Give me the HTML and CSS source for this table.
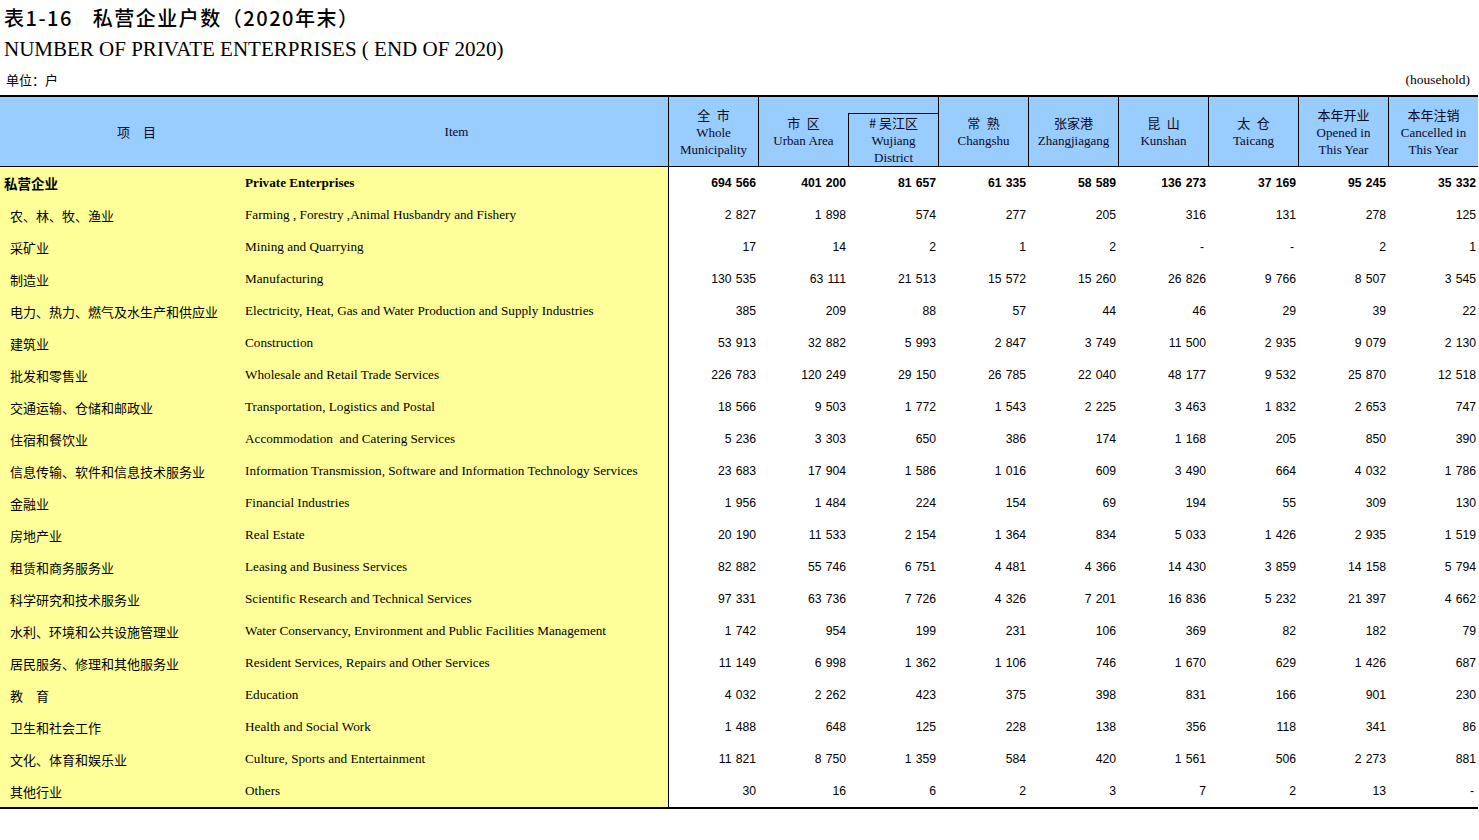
FILE: index.html
```html
<!DOCTYPE html>
<html lang="zh-CN">
<head>
<meta charset="utf-8">
<title>表1-16 私营企业户数（2020年末）</title>
<link rel="stylesheet" href="styles.css">
</head>
<body>
<div class="page">
  <h1 class="title-cn"><span class="tno">表1-16</span><span class="tname">私营企业户数（2020年末）</span></h1>
  <h2 class="title-en">NUMBER OF PRIVATE ENTERPRISES ( END OF 2020)</h2>
  <div class="unit-row"><span class="unit-cn">单位：户</span><span class="unit-en">(household)</span></div>
  <table class="data">
    <colgroup>
      <col class="c-cn"><col class="c-en">
      <col class="c-num"><col class="c-num"><col class="c-num"><col class="c-num"><col class="c-num"><col class="c-num"><col class="c-num"><col class="c-num"><col class="c-num">
    </colgroup>
    <thead>
      <tr class="hr1">
        <th rowspan="2" class="h-cn">项&emsp;目</th>
        <th rowspan="2" class="h-en">Item</th>
        <th rowspan="2" class="h-num"><span class="zh">全&ensp;市</span><br>Whole<br>Municipality</th>
        <th rowspan="2" class="h-num"><span class="zh">市&ensp;区</span><br>Urban Area</th>
        <th class="h-blank"></th>
        <th rowspan="2" class="h-num"><span class="zh">常&ensp;熟</span><br>Changshu</th>
        <th rowspan="2" class="h-num"><span class="zh">张家港</span><br>Zhangjiagang</th>
        <th rowspan="2" class="h-num"><span class="zh">昆&ensp;山</span><br>Kunshan</th>
        <th rowspan="2" class="h-num"><span class="zh">太&ensp;仓</span><br>Taicang</th>
        <th rowspan="2" class="h-num"><span class="zh">本年开业</span><br>Opened in<br>This Year</th>
        <th rowspan="2" class="h-num"><span class="zh">本年注销</span><br>Cancelled in<br>This Year</th>
      </tr>
      <tr class="hr2">
        <th class="h-sub"><span class="zh"># 吴江区</span><br>Wujiang<br>District</th>
      </tr>
    </thead>
    <tbody>
      <tr class="total"><td class="cn">私营企业</td><td class="en">Private Enterprises</td><td class="n first">694 566</td><td class="n">401 200</td><td class="n">81 657</td><td class="n">61 335</td><td class="n">58 589</td><td class="n">136 273</td><td class="n">37 169</td><td class="n">95 245</td><td class="n">35 332</td></tr>
      <tr><td class="cn">农、林、牧、渔业</td><td class="en">Farming , Forestry ,Animal Husbandry and Fishery</td><td class="n first">2 827</td><td class="n">1 898</td><td class="n">574</td><td class="n">277</td><td class="n">205</td><td class="n">316</td><td class="n">131</td><td class="n">278</td><td class="n">125</td></tr>
      <tr><td class="cn">采矿业</td><td class="en">Mining and Quarrying</td><td class="n first">17</td><td class="n">14</td><td class="n">2</td><td class="n">1</td><td class="n">2</td><td class="n dash">-</td><td class="n dash">-</td><td class="n">2</td><td class="n">1</td></tr>
      <tr><td class="cn">制造业</td><td class="en">Manufacturing</td><td class="n first">130 535</td><td class="n">63 111</td><td class="n">21 513</td><td class="n">15 572</td><td class="n">15 260</td><td class="n">26 826</td><td class="n">9 766</td><td class="n">8 507</td><td class="n">3 545</td></tr>
      <tr><td class="cn">电力、热力、燃气及水生产和供应业</td><td class="en">Electricity, Heat, Gas and Water Production and Supply Industries</td><td class="n first">385</td><td class="n">209</td><td class="n">88</td><td class="n">57</td><td class="n">44</td><td class="n">46</td><td class="n">29</td><td class="n">39</td><td class="n">22</td></tr>
      <tr><td class="cn">建筑业</td><td class="en">Construction</td><td class="n first">53 913</td><td class="n">32 882</td><td class="n">5 993</td><td class="n">2 847</td><td class="n">3 749</td><td class="n">11 500</td><td class="n">2 935</td><td class="n">9 079</td><td class="n">2 130</td></tr>
      <tr><td class="cn">批发和零售业</td><td class="en">Wholesale and Retail Trade Services</td><td class="n first">226 783</td><td class="n">120 249</td><td class="n">29 150</td><td class="n">26 785</td><td class="n">22 040</td><td class="n">48 177</td><td class="n">9 532</td><td class="n">25 870</td><td class="n">12 518</td></tr>
      <tr><td class="cn">交通运输、仓储和邮政业</td><td class="en">Transportation, Logistics and Postal</td><td class="n first">18 566</td><td class="n">9 503</td><td class="n">1 772</td><td class="n">1 543</td><td class="n">2 225</td><td class="n">3 463</td><td class="n">1 832</td><td class="n">2 653</td><td class="n">747</td></tr>
      <tr><td class="cn">住宿和餐饮业</td><td class="en">Accommodation&nbsp; and Catering Services</td><td class="n first">5 236</td><td class="n">3 303</td><td class="n">650</td><td class="n">386</td><td class="n">174</td><td class="n">1 168</td><td class="n">205</td><td class="n">850</td><td class="n">390</td></tr>
      <tr><td class="cn">信息传输、软件和信息技术服务业</td><td class="en">Information Transmission, Software and Information Technology Services</td><td class="n first">23 683</td><td class="n">17 904</td><td class="n">1 586</td><td class="n">1 016</td><td class="n">609</td><td class="n">3 490</td><td class="n">664</td><td class="n">4 032</td><td class="n">1 786</td></tr>
      <tr><td class="cn">金融业</td><td class="en">Financial Industries</td><td class="n first">1 956</td><td class="n">1 484</td><td class="n">224</td><td class="n">154</td><td class="n">69</td><td class="n">194</td><td class="n">55</td><td class="n">309</td><td class="n">130</td></tr>
      <tr><td class="cn">房地产业</td><td class="en">Real Estate</td><td class="n first">20 190</td><td class="n">11 533</td><td class="n">2 154</td><td class="n">1 364</td><td class="n">834</td><td class="n">5 033</td><td class="n">1 426</td><td class="n">2 935</td><td class="n">1 519</td></tr>
      <tr><td class="cn">租赁和商务服务业</td><td class="en">Leasing and Business Services</td><td class="n first">82 882</td><td class="n">55 746</td><td class="n">6 751</td><td class="n">4 481</td><td class="n">4 366</td><td class="n">14 430</td><td class="n">3 859</td><td class="n">14 158</td><td class="n">5 794</td></tr>
      <tr><td class="cn">科学研究和技术服务业</td><td class="en">Scientific Research and Technical Services</td><td class="n first">97 331</td><td class="n">63 736</td><td class="n">7 726</td><td class="n">4 326</td><td class="n">7 201</td><td class="n">16 836</td><td class="n">5 232</td><td class="n">21 397</td><td class="n">4 662</td></tr>
      <tr><td class="cn">水利、环境和公共设施管理业</td><td class="en">Water Conservancy, Environment and Public Facilities Management</td><td class="n first">1 742</td><td class="n">954</td><td class="n">199</td><td class="n">231</td><td class="n">106</td><td class="n">369</td><td class="n">82</td><td class="n">182</td><td class="n">79</td></tr>
      <tr><td class="cn">居民服务、修理和其他服务业</td><td class="en">Resident Services, Repairs and Other Services</td><td class="n first">11 149</td><td class="n">6 998</td><td class="n">1 362</td><td class="n">1 106</td><td class="n">746</td><td class="n">1 670</td><td class="n">629</td><td class="n">1 426</td><td class="n">687</td></tr>
      <tr><td class="cn">教&emsp;育</td><td class="en">Education</td><td class="n first">4 032</td><td class="n">2 262</td><td class="n">423</td><td class="n">375</td><td class="n">398</td><td class="n">831</td><td class="n">166</td><td class="n">901</td><td class="n">230</td></tr>
      <tr><td class="cn">卫生和社会工作</td><td class="en">Health and Social Work</td><td class="n first">1 488</td><td class="n">648</td><td class="n">125</td><td class="n">228</td><td class="n">138</td><td class="n">356</td><td class="n">118</td><td class="n">341</td><td class="n">86</td></tr>
      <tr><td class="cn">文化、体育和娱乐业</td><td class="en">Culture, Sports and Entertainment</td><td class="n first">11 821</td><td class="n">8 750</td><td class="n">1 359</td><td class="n">584</td><td class="n">420</td><td class="n">1 561</td><td class="n">506</td><td class="n">2 273</td><td class="n">881</td></tr>
      <tr><td class="cn">其他行业</td><td class="en">Others</td><td class="n first">30</td><td class="n">16</td><td class="n">6</td><td class="n">2</td><td class="n">3</td><td class="n">7</td><td class="n">2</td><td class="n">13</td><td class="n dash">-</td></tr>
    </tbody>
  </table>
</div>
</body>
</html>
```
FILE: styles.css
```css
html, body {
  margin: 0;
  padding: 0;
  background: #ffffff;
}

.page {
  width: 1479px;
  color: #000;
}

.title-cn {
  margin: 0;
  padding: 6px 0 0 4px;
  height: 24px;
  line-height: 24px;
  font-family: "Noto Sans CJK SC", "Liberation Sans", sans-serif;
  font-size: 20px;
  letter-spacing: 1.5px;
  font-weight: 500;
  display: flex;
  gap: 20px;
}

.title-en {
  margin: 6px 0 0 0;
  padding-left: 4px;
  height: 26px;
  line-height: 26px;
  font-family: "Liberation Serif", serif;
  font-size: 21px;
  font-weight: normal;
}

.unit-row {
  margin-top: 10px;
  height: 16px;
  line-height: 16px;
  display: flex;
  justify-content: space-between;
  padding: 0 9px 0 6px;
}

.unit-cn {
  font-family: "Noto Sans CJK SC", sans-serif;
  font-size: 13px;
}

.unit-en {
  font-family: "Liberation Serif", serif;
  font-size: 13.5px;
}

.data {
  margin-top: 7px;
  width: 1478px;
  table-layout: fixed;
  border-collapse: separate;
  border-spacing: 0;
  border-top: 2px solid #000;
  border-bottom: 2px solid #000;
}

.c-cn { width: 245px; }
.c-en { width: 423px; }
.c-num { width: 90px; }

.data th {
  background: #99ccff;
  font-weight: normal;
  font-family: "Liberation Serif", serif;
  font-size: 13px;
  line-height: 17px;
  padding: 0;
  text-align: center;
  vertical-align: middle;
  color: #0a0a1e;
}

.data th .zh {
  font-family: "Noto Sans CJK SC", sans-serif;
  font-size: 13px;
}

.hr1 { height: 16px; }
.hr2 { height: 53px; }

.data th.h-cn {
  font-family: "Noto Sans CJK SC", sans-serif;
  padding-left: 28px;
  border-bottom: 1px solid #000;
}

.data th.h-en {
  border-bottom: 1px solid #000;
}

.data th.h-num {
  border-left: 1px solid #000;
  border-bottom: 1px solid #000;
}

.data th.h-blank {
  height: 16px;
}

.data th.h-sub {
  border-left: 1px solid #000;
  border-top: 1px solid #000;
  border-bottom: 1px solid #000;
}

.data td {
  height: 32px;
  padding: 0;
  vertical-align: middle;
  white-space: nowrap;
}

.data td.cn {
  background: #ffff99;
  font-family: "Noto Sans CJK SC", sans-serif;
  font-size: 13px;
  padding-left: 10px;
}

.data td.en {
  background: #ffff99;
  font-family: "Liberation Serif", serif;
  font-size: 13.2px;
}

.data td.n {
  text-align: right;
  padding-right: 2px;
  font-family: "Liberation Sans", Arial, sans-serif;
  font-size: 12.2px;
  word-spacing: 0.8px;
}

.data td.first {
  border-left: 1px solid #000;
}

.data td.dash {
  padding-right: 4px;
}

.total td.cn {
  padding-left: 4px;
  font-weight: 700;
  font-size: 13.5px;
}

.total td.en,
.total td.n {
  font-weight: 700;
}
```
